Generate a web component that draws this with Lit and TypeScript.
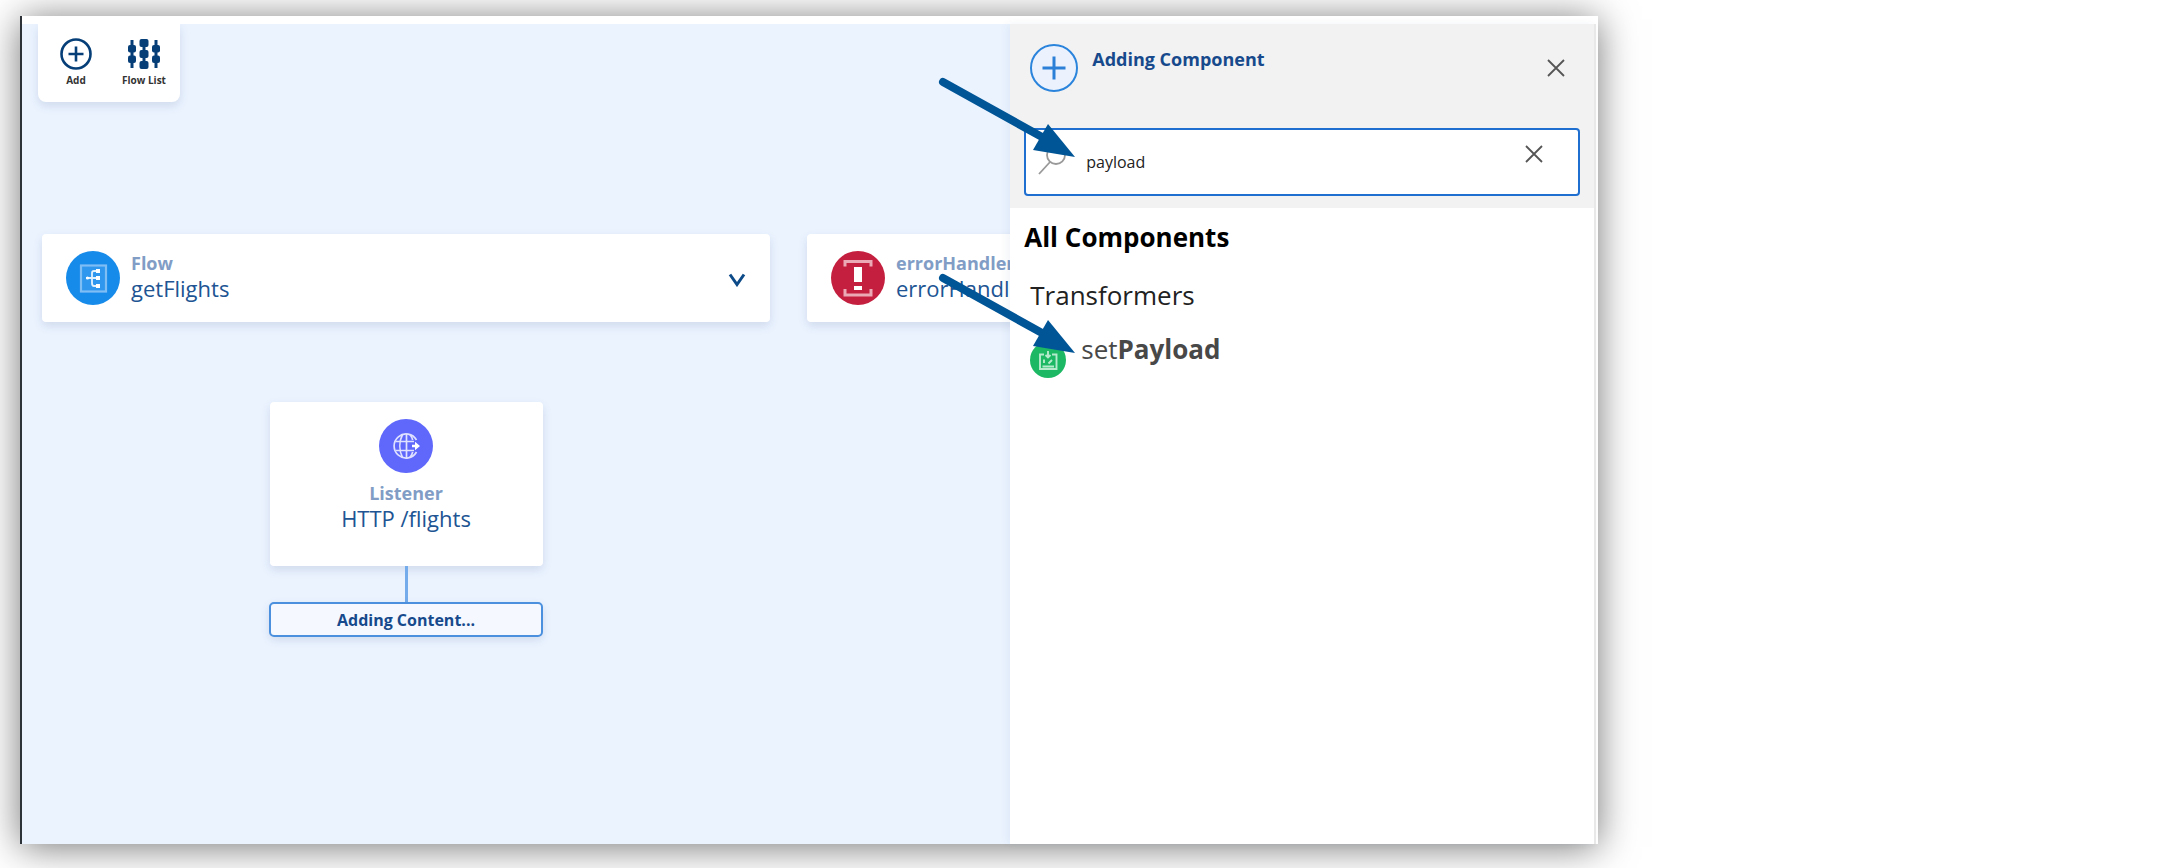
import { LitElement, html, css, svg, TemplateResult } from "lit";
import { customElement, property, state } from "lit/decorators.js";

const flowIcon = svg`
  <circle cx="27" cy="27" r="27" fill="#178bea"/>
  <rect x="15" y="14.500" width="25" height="26" fill="#2f97ed" stroke="#7fbdf5" stroke-width="2.200"/>
  <path d="M20 27h12M32 20h-4q-2 0-2 2v10q0 3 2 3h4" fill="none" stroke="#e3f1fd" stroke-width="1.800"/>
  <rect x="30" y="18" width="4" height="4" fill="#fff"/><rect x="30" y="25" width="4" height="4" fill="#fff"/><rect x="30" y="33" width="4" height="4" fill="#fff"/>
  <circle cx="21.500" cy="27" r="1.600" fill="#fff"/>`;

const errorIcon = svg`
  <circle cx="27" cy="27" r="27" fill="#c41f3e"/>
  <path d="M14 15.500V10.500H40V15.500M14 38V44H40V38" fill="none" stroke="#eba9b5" stroke-width="3"/>
  <path d="M23 16h8v15h-8zM23 35h8v4h-8z" fill="#fff"/>`;

const listenerIcon = svg`
  <circle cx="27" cy="27" r="27" fill="#5f68fb"/>
  <g fill="none" stroke="#dfe1ff" stroke-width="1.700">
    <path d="M37.500 21A12 12 0 1 0 37.500 33"/>
    <path d="M27.500 15v24M23.500 15.500c-3.500 7-3.500 16 0 23M31 15.500c1.500 2 2.200 3.500 2.700 5.500M33.700 33c-.5 2-1.200 3.500-2.700 5.500M17 22.500h18M17 31.500h18"/>
  </g>
  <path d="M33 25.800h3v-3l5 4.200-5 4.200v-3H33z" fill="#fff"/>`;

const payloadIcon = svg`
  <circle cx="18" cy="18" r="18" fill="#1cb864"/>
  <g fill="none" stroke="#b5ebcc" stroke-width="1.900">
    <path d="M14 12.500H10V27H26.500V12.500H22"/>
    <path d="M12.500 24.500h11.500M18 9v6M15.500 13l2.500 2.500 2.500-2.500M14 17.500v3.500M22 18l-3.500 3.500"/>
  </g>`;

const cross = html`<svg width="18" height="18" viewBox="0 0 18 18" aria-hidden="true">
  <path d="M1 1L17 17M17 1L1 17" stroke="#555" stroke-width="1.800" fill="none"/></svg>`;

const pointer = svg`
  <path d="M5 6L104 61" stroke="#005596" stroke-width="8" stroke-linecap="round"/>
  <path d="M110 48L95 74L137 81Z" fill="#005596"/>`;

@customElement("flow-card")
class FlowCard extends LitElement {
  @property() kind = "";
  @property() name = "";
  @property({ attribute: false }) icon?: TemplateResult;
  @property({ type: Boolean }) stacked = false;
  @property({ type: Boolean }) expandable = false;

  static styles = css`
    :host { display: block; }
    .card {
      box-sizing: border-box; display: flex; align-items: flex-start; gap: 11px;
      min-height: 88px; padding: 17px 24px; background: #fff; border-radius: 4px;
      box-shadow: 0 4px 10px rgba(40, 70, 120, .14);
    }
    .stacked { flex-direction: column; align-items: center; gap: 8px; min-height: 164px; text-align: center; }
    .icon { display: block; flex: none; }
    .texts { flex: 1; white-space: nowrap; }
    .kind { font-size: 18px; line-height: 24px; font-weight: 700; color: #819dc6; }
    .name { font-size: 22px; line-height: 26px; color: #205493; }
    .toggle { align-self: center; margin: 4px 0 0; padding: 0; border: 0; background: none; display: block; }
    .toggle svg { display: block; }
  `;

  render() {
    return html`<article class="card ${this.stacked ? "stacked" : ""}">
      <svg class="icon" width="54" height="54" viewBox="0 0 54 54" aria-hidden="true">${this.icon}</svg>
      <div class="texts">
        <div class="kind">${this.kind}</div>
        <div class="name">${this.name}</div>
      </div>
      ${this.expandable
        ? html`<button class="toggle" aria-label="Collapse flow">
            <svg width="18" height="14" viewBox="0 0 18 14"><path d="M2 1.500L9 11.500L16 1.500" fill="none" stroke="#0d4a88" stroke-width="3"/></svg>
          </button>`
        : null}
    </article>`;
  }
}

@customElement("component-panel")
class ComponentPanel extends LitElement {
  @state() query = "payload";

  static styles = css`
    :host { display: block; background: #fff; }
    .head { background: #f2f2f2; padding: 20px 14px 12px; }
    .bar { display: flex; align-items: flex-start; gap: 14px; padding-left: 6px; margin-bottom: 36px; }
    .bar svg { display: block; }
    h2 { flex: 1; margin: 0; font-size: 18px; line-height: 30px; color: #174a8c; }
    button { padding: 0; border: 0; background: none; display: grid; place-items: center; }
    .close { width: 48px; height: 48px; }
    .search {
      box-sizing: border-box; height: 68px; display: flex; align-items: center;
      padding: 0 26px 0 12px; background: #fff; border: 2px solid #1f6fd0; border-radius: 4px;
    }
    .search label { flex: none; display: block; margin-right: 20px; }
    .search label svg { display: block; }
    input {
      flex: 1; min-width: 0; padding: 0; border: 0; outline: 0; background: none;
      font: 16px/24px "Open Sans", sans-serif; color: #222;
    }
    .clear { width: 36px; height: 36px; align-self: flex-start; margin-top: 6px; }
    .results { padding: 11px 14px; }
    h3 { margin: 0 0 22px; font-size: 26px; line-height: 36px; color: #000; }
    h4 { margin: 0 0 18px 6px; font-size: 26px; line-height: 36px; font-weight: 400; color: #222; }
    ul { list-style: none; margin: 0; padding: 0 0 0 6px; }
    .item { display: flex; align-items: flex-start; gap: 15px; font-size: 26px; line-height: 36px; color: #484848; text-decoration: none; }
    .item svg { margin-top: 11px; }
  `;

  render() {
    return html`
      <header class="head">
        <div class="bar">
          <svg width="48" height="48" viewBox="0 0 48 48" aria-hidden="true">
            <circle cx="24" cy="24" r="23" fill="#ebf2fe" stroke="#2b84dc" stroke-width="2"/>
            <path d="M24 12.500v23M12.500 24h23" stroke="#2b7fd6" stroke-width="3"/>
          </svg>
          <h2>Adding Component</h2>
          <button class="close" aria-label="Close">${cross}</button>
        </div>
        <div class="search">
          <label for="query" aria-label="Search components">
            <svg width="28" height="28" viewBox="0 0 28 28"><g fill="none" stroke="#999" stroke-width="1.800"><circle cx="18" cy="7" r="9"/><path d="M12 14L1 26"/></g></svg>
          </label>
          <input id="query" type="text" .value=${this.query}
            @input=${(e: Event) => (this.query = (e.target as HTMLInputElement).value)}>
          <button class="clear" aria-label="Clear search" @click=${() => (this.query = "")}>${cross}</button>
        </div>
      </header>
      <section class="results">
        <h3>All Components</h3>
        <h4>Transformers</h4>
        <ul>
          <li><a class="item" href="#setPayload">
            <svg width="36" height="36" viewBox="0 0 36 36" aria-hidden="true">${payloadIcon}</svg>
            <span>set<b>Payload</b></span>
          </a></li>
        </ul>
      </section>`;
  }
}

@customElement("app-root")
class AppRoot extends LitElement {
  static styles = css`
    :host {
      display: flow-root; box-sizing: border-box; min-height: 100vh; padding: 16px 20px 24px;
      background: #fff; font-family: "Open Sans", sans-serif; overflow: hidden;
    }
    .window {
      box-sizing: border-box; width: 73vw; min-height: calc(100vh - 40px); display: flex;
      padding: 8px 2px 0 0; border-left: 2px solid #2d3138; background: #fff;
      box-shadow: 0 3px 36px rgba(0, 0, 0, .54);
    }
    .canvas { flex: 1; min-width: 0; overflow: hidden; background: #ebf3ff; }
    .tools {
      width: max-content; display: flex; margin-left: 16px; padding: 0 2px 0 4px;
      background: #fff; border-radius: 0 0 8px 8px; box-shadow: 0 4px 10px rgba(40, 70, 120, .14);
    }
    .tool {
      width: 68px; height: 78px; padding: 14px 0 0; border: 0; background: none;
      display: flex; flex-direction: column; align-items: center; gap: 4px;
      font: 700 10px/12px "Open Sans", sans-serif; color: #333;
    }
    .flows { display: flex; align-items: flex-start; gap: 37px; margin: 132px 0 0 20px; }
    .flow { flex: none; width: 728px; display: flex; flex-direction: column; align-items: center; }
    .flow flow-card { align-self: stretch; }
    .flow .step { align-self: center; width: 273px; margin-top: 80px; }
    .link { width: 3px; height: 36px; background: #74aceb; }
    .adding {
      box-sizing: border-box; width: 274px; height: 35px; border: 2px solid #4a90de; border-radius: 5px;
      background: #f5f9ff; text-align: center; font-size: 16px; line-height: 33px; font-weight: 700;
      color: #174a8c; box-shadow: 0 3px 8px rgba(40, 70, 120, .14);
    }
    .side {
      position: relative; flex: none; width: 584px; border-right: 2px solid #e8e8e8;
      box-shadow: -3px 0 8px rgba(40, 70, 120, .06);
    }
    .side component-panel { height: 100%; }
    .pointer { position: absolute; left: -72px; width: 140px; height: 86px; pointer-events: none; }
    .to-search { top: 52px; }
    .to-result { top: 248px; }
  `;

  render() {
    return html`<main class="window">
      <section class="canvas">
        <nav class="tools">
          <button class="tool">
            <svg width="32" height="32" viewBox="0 0 32 32"><g fill="none" stroke="#063f78" stroke-width="2.600"><circle cx="16" cy="16" r="14.500"/><path d="M16 8.500v15M8.500 16h15"/></g></svg>
            Add
          </button>
          <button class="tool">
            <svg width="32" height="32" viewBox="0 0 32 32">
              <path d="M4 2v28M16 1v30M28 2v28" stroke="#063f78" stroke-width="3"/>
              <g fill="#063f78">
                <rect y="7" width="8" height="7.500" rx="2"/><rect y="17.500" width="8" height="7.500" rx="2"/>
                <rect x="11.500" y="1" width="9" height="8" rx="2"/><rect x="11.500" y="12" width="9" height="8" rx="2"/><rect x="11.500" y="23" width="9" height="8" rx="2"/>
                <rect x="24" y="7" width="8" height="7.500" rx="2"/><rect x="24" y="17.500" width="8" height="7.500" rx="2"/>
              </g>
            </svg>
            Flow List
          </button>
        </nav>
        <div class="flows">
          <div class="flow">
            <flow-card kind="Flow" name="getFlights" expandable .icon=${flowIcon}></flow-card>
            <flow-card class="step" kind="Listener" name="HTTP /flights" stacked .icon=${listenerIcon}></flow-card>
            <div class="link"></div>
            <div class="adding">Adding Content...</div>
          </div>
          <div class="flow">
            <flow-card kind="errorHandler" name="errorHandler" .icon=${errorIcon}></flow-card>
          </div>
        </div>
      </section>
      <aside class="side">
        <component-panel></component-panel>
        <svg class="pointer to-search" viewBox="0 0 140 86" aria-hidden="true">${pointer}</svg>
        <svg class="pointer to-result" viewBox="0 0 140 86" aria-hidden="true">${pointer}</svg>
      </aside>
    </main>`;
  }
}
